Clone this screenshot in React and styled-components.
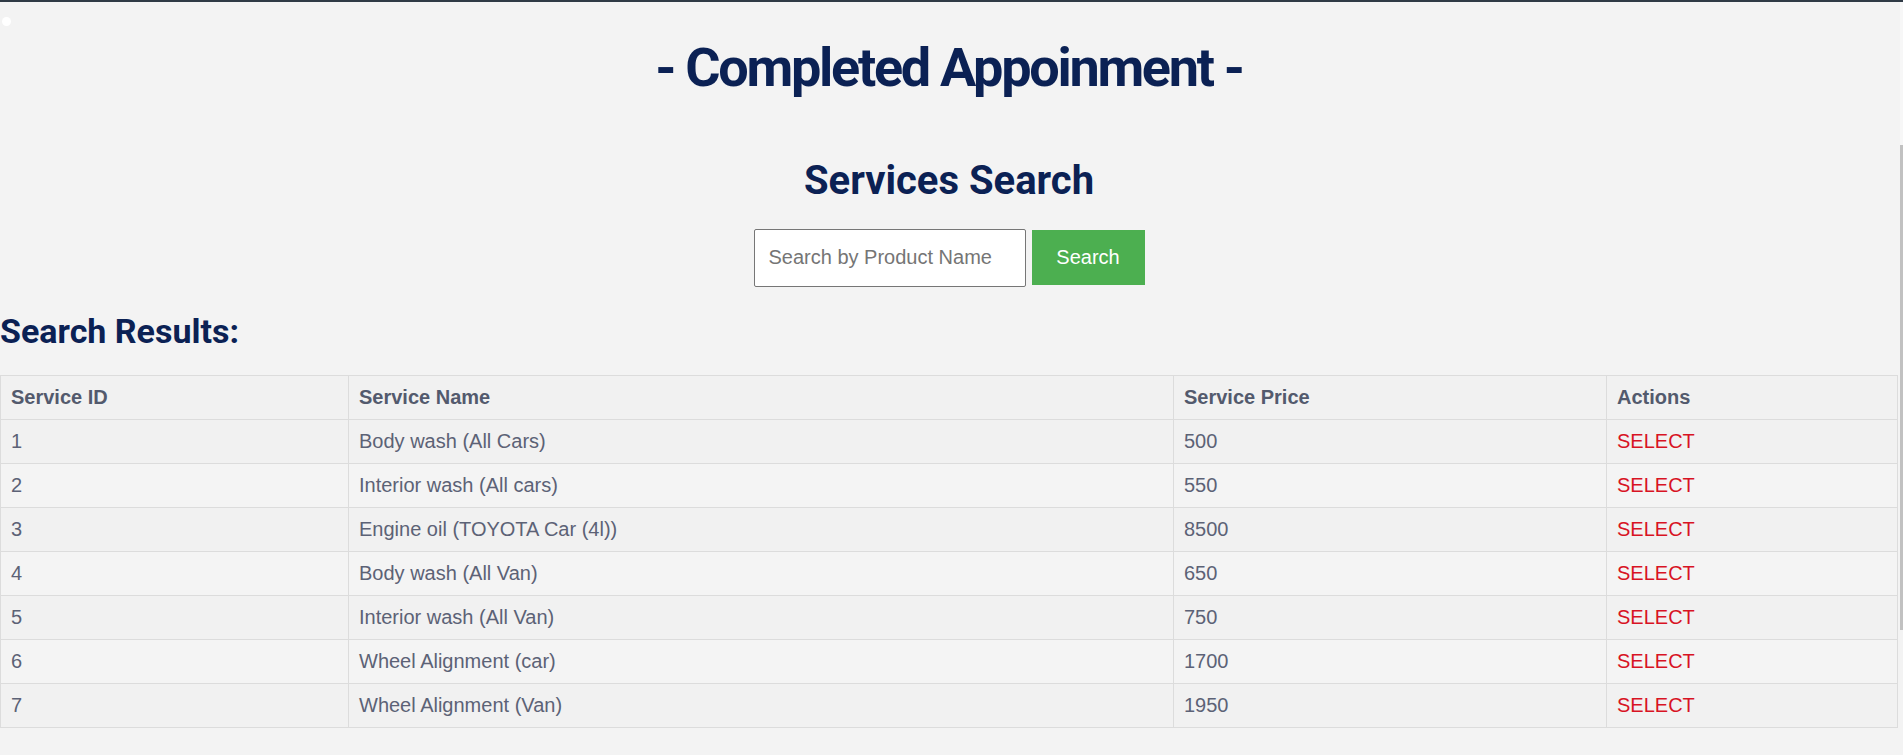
import React from "react";
import styled, { createGlobalStyle } from "styled-components";

const GlobalStyle = createGlobalStyle`
  html, body {
    margin: 0;
    padding: 0;
    background: #f3f3f3;
  }
  body {
    font-family: "Liberation Sans", Arial, sans-serif;
  }
`;

// the thin scrollbar on the right edge is painted as a background stripe
const Viewport = styled.div`
  height: 100vh;
  overflow-y: auto;
  padding-right: 5px;
  box-sizing: border-box;
  background:
    linear-gradient(#c1c1c1, #c1c1c1) right 0 top 145px / 3px 485px no-repeat,
    linear-gradient(#f7f7f7, #f7f7f7) right 0 top 0 / 3px 145px no-repeat,
    #f3f3f3;

  &::-webkit-scrollbar {
    display: none;
  }
`;

const Page = styled.div`
  position: relative;
`;

const TopBar = styled.div`
  height: 2px;
  margin-right: -5px;
  background: #2f3a45;
`;

const Dot = styled.span`
  position: absolute;
  left: 2px;
  top: 17px;
  width: 9px;
  height: 9px;
  border-radius: 50%;
  background: #ffffff;
`;

const Title = styled.h1`
  margin: 34px 0 0;
  text-align: center;
  font-family: Roboto, "Liberation Sans", sans-serif;
  font-size: 54px;
  line-height: 1.2;
  font-weight: 700;
  letter-spacing: -2.3px;
  color: #0b2154;
`;

const SearchHeading = styled.h2`
  margin: 57px 0 0;
  text-align: center;
  font-family: Roboto, "Liberation Sans", sans-serif;
  font-size: 40px;
  line-height: 46px;
  font-weight: 700;
  color: #0b2154;
`;

const SearchForm = styled.form`
  display: flex;
  justify-content: center;
  align-items: center;
  gap: 6px;
  margin-top: 25px;
`;

const SearchInput = styled.input`
  box-sizing: border-box;
  width: 272px;
  height: 58px;
  padding: 0 14px;
  border: 1px solid #767676;
  border-radius: 2px;
  background: #ffffff;
  font-family: "Liberation Sans", Arial, sans-serif;
  font-size: 20px;
  color: #333;

  &::placeholder {
    color: #757575;
  }
`;

const SearchButton = styled.button`
  box-sizing: border-box;
  width: 113px;
  height: 55px;
  border: none;
  background: #4caf50;
  color: #ffffff;
  font-family: "Liberation Sans", Arial, sans-serif;
  font-size: 20px;
  cursor: pointer;
`;

const ResultsHeading = styled.h3`
  margin: 24px 0 0;
  font-family: Roboto, "Liberation Sans", sans-serif;
  font-size: 34px;
  line-height: 1.2;
  font-weight: 700;
  color: #0b2154;
`;

const Table = styled.table`
  width: 100%;
  margin-top: 23px;
  border-collapse: collapse;
  table-layout: fixed;
  font-size: 20px;
  line-height: 23px;
`;

const HeadCell = styled.th`
  padding: 10px;
  border: 1px solid #dcdcdc;
  background: #f1f1f1;
  text-align: left;
  font-weight: 700;
  color: #535a6d;
`;

const Row = styled.tr`
  background: ${({ $even }) => ($even ? "#f4f4f4" : "#f1f1f1")};
`;

const Cell = styled.td`
  padding: 10px;
  border: 1px solid #dcdcdc;
  color: #5c6276;
`;

const SelectLink = styled.a`
  color: #d81324;
  text-decoration: none;
  cursor: pointer;
`;

const services = [
  { id: 1, name: "Body wash (All Cars)", price: 500 },
  { id: 2, name: "Interior wash (All cars)", price: 550 },
  { id: 3, name: "Engine oil (TOYOTA Car (4l))", price: 8500 },
  { id: 4, name: "Body wash (All Van)", price: 650 },
  { id: 5, name: "Interior wash (All Van)", price: 750 },
  { id: 6, name: "Wheel Alignment (car)", price: 1700 },
  { id: 7, name: "Wheel Alignment (Van)", price: 1950 },
];

const App = () => {
  return (
    <Viewport>
      <GlobalStyle />
      <Page>
        <TopBar />
        <Dot />
        <Title>- Completed Appoinment -</Title>
        <SearchHeading>Services Search</SearchHeading>
        <SearchForm onSubmit={(e) => e.preventDefault()}>
          <SearchInput type="text" placeholder="Search by Product Name" />
          <SearchButton type="submit">Search</SearchButton>
        </SearchForm>
        <ResultsHeading>Search Results:</ResultsHeading>
        <Table>
          <colgroup>
            <col style={{ width: "348px" }} />
            <col style={{ width: "825px" }} />
            <col style={{ width: "433px" }} />
            <col />
          </colgroup>
          <thead>
            <tr>
              <HeadCell>Service ID</HeadCell>
              <HeadCell>Service Name</HeadCell>
              <HeadCell>Service Price</HeadCell>
              <HeadCell>Actions</HeadCell>
            </tr>
          </thead>
          <tbody>
            {services.map((s, i) => (
              <Row key={s.id} $even={i % 2 === 1}>
                <Cell>{s.id}</Cell>
                <Cell>{s.name}</Cell>
                <Cell>{s.price}</Cell>
                <Cell>
                  <SelectLink>SELECT</SelectLink>
                </Cell>
              </Row>
            ))}
          </tbody>
        </Table>
      </Page>
    </Viewport>
  );
};

export default App;
